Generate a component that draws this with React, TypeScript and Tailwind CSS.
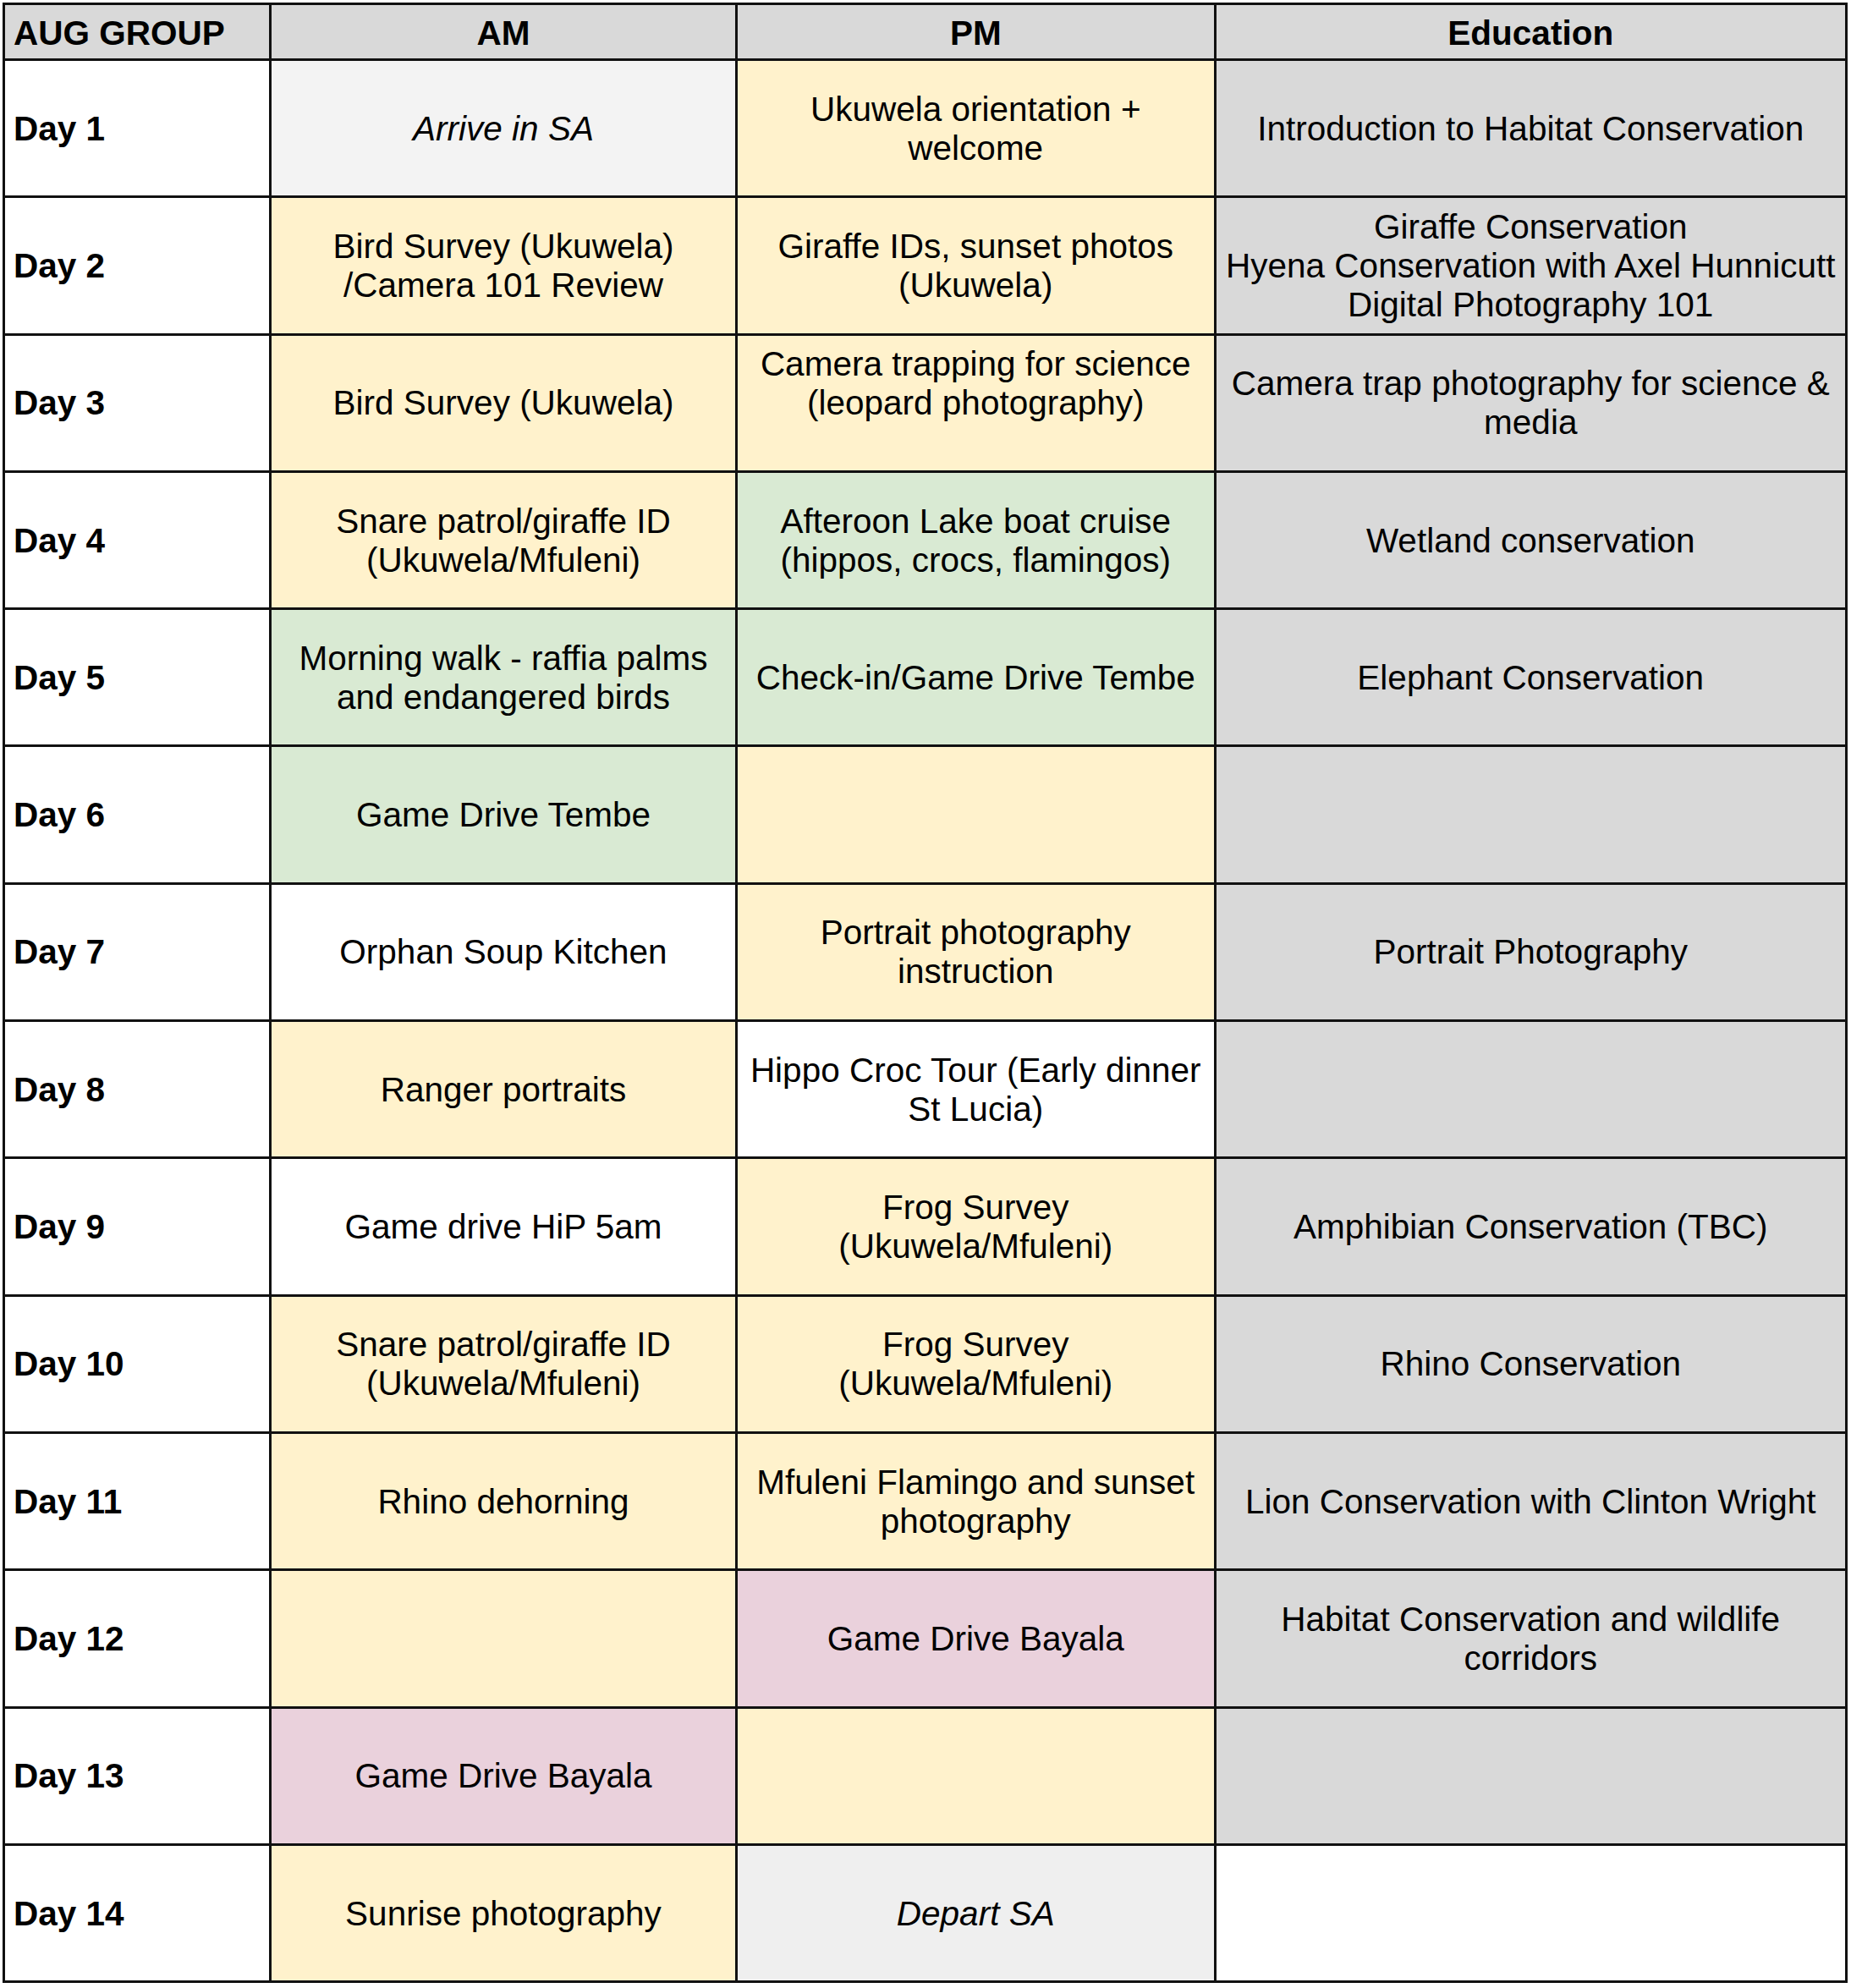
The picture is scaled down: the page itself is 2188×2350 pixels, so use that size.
import React from 'react';

type Tone = 'white' | 'yellow' | 'green' | 'pink' | 'gray' | 'light' | 'lighter';

interface Cell {
  lines: string[];
  tone: Tone;
  italic?: boolean;
}

interface Row {
  day: string;
  am: Cell;
  pm: Cell;
  edu: Cell;
}

const TONES: Record<Tone, string> = {
  white: 'bg-white',
  yellow: 'bg-[#fff2cc]',
  green: 'bg-[#d9ead3]',
  pink: 'bg-[#ead1dc]',
  gray: 'bg-[#d9d9d9]',
  light: 'bg-[#f3f3f3]',
  lighter: 'bg-[#efefef]',
};

const ROWS: Row[] = [
  {
    day: 'Day 1',
    am: { lines: ['Arrive in SA'], tone: 'light', italic: true },
    pm: { lines: ['Ukuwela orientation +', 'welcome'], tone: 'yellow' },
    edu: { lines: ['Introduction to Habitat Conservation'], tone: 'gray' },
  },
  {
    day: 'Day 2',
    am: { lines: ['Bird Survey (Ukuwela)', '/Camera 101 Review'], tone: 'yellow' },
    pm: { lines: ['Giraffe IDs, sunset photos', '(Ukuwela)'], tone: 'yellow' },
    edu: {
      lines: ['Giraffe Conservation', 'Hyena Conservation with Axel Hunnicutt', 'Digital Photography 101'],
      tone: 'gray',
    },
  },
  {
    day: 'Day 3',
    am: { lines: ['Bird Survey (Ukuwela)'], tone: 'yellow' },
    // trailing blank line in the sheet pushes this one up
    pm: { lines: ['Camera trapping for science', '(leopard photography)', '\u00a0'], tone: 'yellow' },
    edu: { lines: ['Camera trap photography for science &', 'media'], tone: 'gray' },
  },
  {
    day: 'Day 4',
    am: { lines: ['Snare patrol/giraffe ID', '(Ukuwela/Mfuleni)'], tone: 'yellow' },
    pm: { lines: ['Afteroon Lake boat cruise', '(hippos, crocs, flamingos)'], tone: 'green' },
    edu: { lines: ['Wetland conservation'], tone: 'gray' },
  },
  {
    day: 'Day 5',
    am: { lines: ['Morning walk - raffia palms', 'and endangered birds'], tone: 'green' },
    pm: { lines: ['Check-in/Game Drive Tembe'], tone: 'green' },
    edu: { lines: ['Elephant Conservation'], tone: 'gray' },
  },
  {
    day: 'Day 6',
    am: { lines: ['Game Drive Tembe'], tone: 'green' },
    pm: { lines: [], tone: 'yellow' },
    edu: { lines: [], tone: 'gray' },
  },
  {
    day: 'Day 7',
    am: { lines: ['Orphan Soup Kitchen'], tone: 'white' },
    pm: { lines: ['Portrait photography', 'instruction'], tone: 'yellow' },
    edu: { lines: ['Portrait Photography'], tone: 'gray' },
  },
  {
    day: 'Day 8',
    am: { lines: ['Ranger portraits'], tone: 'yellow' },
    pm: { lines: ['Hippo Croc Tour (Early dinner', 'St Lucia)'], tone: 'white' },
    edu: { lines: [], tone: 'gray' },
  },
  {
    day: 'Day 9',
    am: { lines: ['Game drive HiP 5am'], tone: 'white' },
    pm: { lines: ['Frog Survey', '(Ukuwela/Mfuleni)'], tone: 'yellow' },
    edu: { lines: ['Amphibian Conservation (TBC)'], tone: 'gray' },
  },
  {
    day: 'Day 10',
    am: { lines: ['Snare patrol/giraffe ID', '(Ukuwela/Mfuleni)'], tone: 'yellow' },
    pm: { lines: ['Frog Survey', '(Ukuwela/Mfuleni)'], tone: 'yellow' },
    edu: { lines: ['Rhino Conservation'], tone: 'gray' },
  },
  {
    day: 'Day 11',
    am: { lines: ['Rhino dehorning'], tone: 'yellow' },
    pm: { lines: ['Mfuleni Flamingo and sunset', 'photography'], tone: 'yellow' },
    edu: { lines: ['Lion Conservation with Clinton Wright'], tone: 'gray' },
  },
  {
    day: 'Day 12',
    am: { lines: [], tone: 'yellow' },
    pm: { lines: ['Game Drive Bayala'], tone: 'pink' },
    edu: { lines: ['Habitat Conservation and wildlife', 'corridors'], tone: 'gray' },
  },
  {
    day: 'Day 13',
    am: { lines: ['Game Drive Bayala'], tone: 'pink' },
    pm: { lines: [], tone: 'yellow' },
    edu: { lines: [], tone: 'gray' },
  },
  {
    day: 'Day 14',
    am: { lines: ['Sunrise photography'], tone: 'yellow' },
    pm: { lines: ['Depart SA'], tone: 'lighter', italic: true },
    edu: { lines: [], tone: 'white' },
  },
];

function TextCell({ cell }: { cell: Cell }) {
  return (
    <div
      className={`flex flex-col items-center justify-center px-[4px] text-center ${TONES[cell.tone]} ${
        cell.italic ? 'italic' : ''
      }`}
    >
      {cell.lines.map((line, i) => (
        <span key={i} className="block whitespace-nowrap">
          {line}
        </span>
      ))}
    </div>
  );
}

export default function App() {
  return (
    <div className="min-h-[2350px] w-[2188px] bg-white pl-[3px] pt-[3px]">
      <div
        className="grid w-fit gap-[3px] bg-[#111] p-[3px] text-[40.5px] leading-[46px] text-black"
        style={{ fontFamily: '"Liberation Sans", Arial, Helvetica, sans-serif' }}
      >
        <div className="grid h-[63px] grid-cols-[312px_548px_562.5px_743.5px] gap-[3px] font-bold">
          <div className="flex items-center bg-[#d9d9d9] pl-[10px] pt-[3px]">AUG GROUP</div>
          <div className="flex items-center justify-center bg-[#d9d9d9] pt-[3px]">AM</div>
          <div className="flex items-center justify-center bg-[#d9d9d9] pt-[3px]">PM</div>
          <div className="flex items-center justify-center bg-[#d9d9d9] pt-[3px]">Education</div>
        </div>
        {ROWS.map((row) => (
          <div
            key={row.day}
            className="grid h-[159.3px] grid-cols-[312px_548px_562.5px_743.5px] gap-[3px]"
          >
            <div className="flex items-center bg-white pl-[10px] font-bold">{row.day}</div>
            <TextCell cell={row.am} />
            <TextCell cell={row.pm} />
            <TextCell cell={row.edu} />
          </div>
        ))}
      </div>
    </div>
  );
}
